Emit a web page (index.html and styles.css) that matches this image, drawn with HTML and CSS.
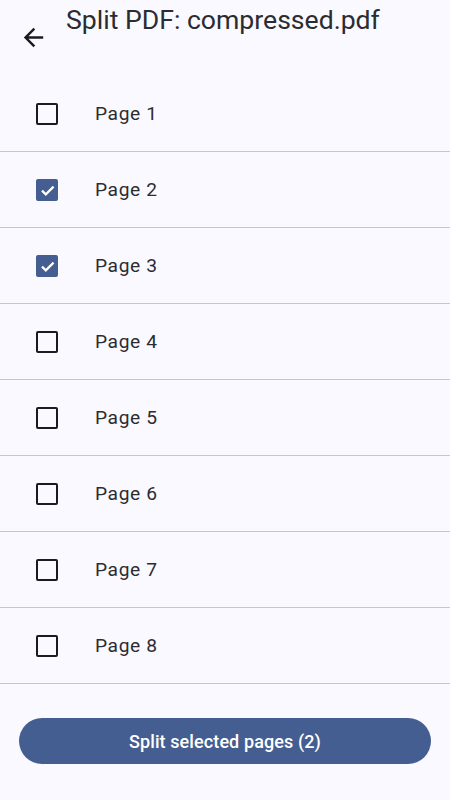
FILE: index.html
```html
<!DOCTYPE html>
<html lang="en">
<head>
<meta charset="utf-8">
<title>Split PDF</title>
<link rel="stylesheet" href="styles.css">
</head>
<body>
<div class="screen">
  <header class="appbar">
    <button class="back" aria-label="Back">
      <svg viewBox="0 0 24 24" width="29" height="29"><path d="M20 11H7.83l5.59-5.59L12 4l-8 8 8 8 1.41-1.41L7.83 13H20v-2z" fill="#1a1b20"/></svg>
    </button>
    <h1 class="title">Split PDF: compressed.pdf</h1>
  </header>
  <ul class="pages">
    <li class="row"><span class="box"></span><span class="label">Page 1</span></li>
    <li class="row"><span class="box checked"><svg viewBox="0 0 22 22" width="22" height="22"><path d="M6 11.6l3.8 3.8 7.8-7.8" fill="none" stroke="#fff" stroke-width="2.2"/></svg></span><span class="label">Page 2</span></li>
    <li class="row"><span class="box checked"><svg viewBox="0 0 22 22" width="22" height="22"><path d="M6 11.6l3.8 3.8 7.8-7.8" fill="none" stroke="#fff" stroke-width="2.2"/></svg></span><span class="label">Page 3</span></li>
    <li class="row"><span class="box"></span><span class="label">Page 4</span></li>
    <li class="row"><span class="box"></span><span class="label">Page 5</span></li>
    <li class="row"><span class="box"></span><span class="label">Page 6</span></li>
    <li class="row"><span class="box"></span><span class="label">Page 7</span></li>
    <li class="row"><span class="box"></span><span class="label">Page 8</span></li>
  </ul>
  <div class="footer">
    <button class="split">Split selected pages (2)</button>
  </div>
</div>
</body>
</html>
```
FILE: styles.css
```css
* { box-sizing: border-box; }
html, body {
  margin: 0;
  padding: 0;
  background: #f9f9ff;
}
body {
  font-family: Roboto, "Noto Sans", sans-serif;
  color: #1a1b20;
}
.screen {
  width: 450px;
  height: 800px;
  display: flex;
  flex-direction: column;
}
.appbar {
  height: 76px;
  display: flex;
  align-items: flex-start;
}
.back {
  border: 0;
  background: none;
  padding: 0;
  margin: 23px 0 0 19px;
  width: 29px;
  height: 29px;
  display: flex;
}
.title {
  margin: 3px 0 0 18px;
  font-size: 26.6px;
  font-weight: 400;
  line-height: 34px;
  color: #2b2c31;
}
.pages {
  list-style: none;
  margin: 0;
  padding: 0;
}
.row {
  height: 76px;
  display: flex;
  align-items: center;
  border-bottom: 1px solid #c4c6d0;
  padding-left: 36px;
}
.box {
  width: 22px;
  height: 22px;
  border: 2.4px solid #1a1b20;
  border-radius: 2px;
  display: flex;
  align-items: center;
  justify-content: center;
  flex: none;
}
.box.checked {
  background: #445e91;
  border-color: #445e91;
}
.box svg { flex: none; }
.label {
  margin-left: 37px;
  font-size: 19.2px;
  letter-spacing: 0.6px;
  color: #2b2c31;
  padding-bottom: 1px;
}
.footer {
  padding: 34px 19px 0;
}
.split {
  width: 100%;
  height: 46px;
  border: 0;
  border-radius: 23px;
  background: #445e91;
  color: #fff;
  font-family: Roboto, "Noto Sans", sans-serif;
  font-size: 18px;
  font-weight: 500;
  letter-spacing: 0.1px;
}
```
